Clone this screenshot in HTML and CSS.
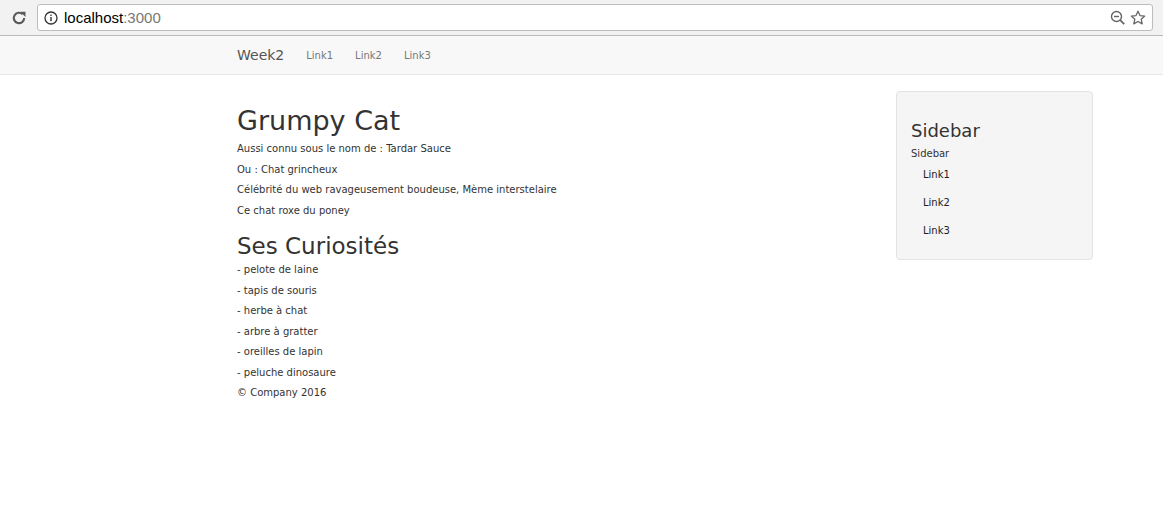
FILE: index.html
```html
<!DOCTYPE html>
<html lang="fr">
<head>
<meta charset="utf-8">
<title>Week2</title>
<link rel="stylesheet" href="styles.css">
</head>
<body>
<div class="chrome">
  <svg class="reload" width="16" height="16" viewBox="0 0 16 16"><path d="M13.2 8a5.2 5.2 0 1 1-1.6-3.8" fill="none" stroke="#5a5a5a" stroke-width="2.1"/><path d="M9.3 1.8h5.2V7z" fill="#5a5a5a"/></svg>
  <div class="omnibox">
    <svg class="info" width="14" height="14" viewBox="0 0 14 14"><circle cx="7" cy="7" r="6" fill="none" stroke="#333" stroke-width="1.3"/><rect x="6.3" y="6" width="1.4" height="4.2" fill="#333"/><rect x="6.3" y="3.5" width="1.4" height="1.4" fill="#333"/></svg>
    <span class="url">localhost<span class="port">:3000</span></span>
    <span class="spacer"></span>
    <svg class="zoom" width="16" height="16" viewBox="0 0 16 16"><circle cx="6.5" cy="6.5" r="5" fill="none" stroke="#666" stroke-width="1.4"/><path d="M4 6.5h5" stroke="#666" stroke-width="1.4"/><path d="M10.2 10.2l4 4" stroke="#666" stroke-width="1.8"/></svg>
    <svg class="star" width="16" height="16" viewBox="0 0 16 16"><path d="M8 1.3l2 4.3 4.7.5-3.5 3.2 1 4.6L8 11.5l-4.2 2.4 1-4.6L1.3 6.1l4.7-.5z" fill="none" stroke="#666" stroke-width="1.3" stroke-linejoin="round"/></svg>
  </div>
</div>
<nav class="navbar">
  <div class="nav-inner">
    <a class="brand" href="#">Week2</a>
    <a class="nav-link" href="#">Link1</a>
    <a class="nav-link" href="#">Link2</a>
    <a class="nav-link" href="#">Link3</a>
  </div>
</nav>
<div class="page">
  <main class="content">
    <h1>Grumpy Cat</h1>
    <p>Aussi connu sous le nom de : Tardar Sauce</p>
    <p>Ou : Chat grincheux</p>
    <p>Célébrité du web ravageusement boudeuse, Mème interstelaire</p>
    <p>Ce chat roxe du poney</p>
    <h2>Ses Curiosités</h2>
    <p>- pelote de laine</p>
    <p>- tapis de souris</p>
    <p>- herbe à chat</p>
    <p>- arbre à gratter</p>
    <p>- oreilles de lapin</p>
    <p>- peluche dinosaure</p>
    <footer class="footer">© Company 2016</footer>
  </main>
  <aside class="well">
    <h3>Sidebar</h3>
    <div class="well-sub">Sidebar</div>
    <ul class="side-links">
      <li><a href="#">Link1</a></li>
      <li><a href="#">Link2</a></li>
      <li><a href="#">Link3</a></li>
    </ul>
  </aside>
</div>
</body>
</html>
```
FILE: styles.css
```css
* { box-sizing: border-box; }
html, body { margin: 0; padding: 0; background: #fff; }
body { font-family: "DejaVu Sans", Verdana, sans-serif; color: #333; font-size: 10px; }
a { text-decoration: none; }

.chrome {
  height: 36px;
  background: #f2f2f2;
  border-bottom: 1px solid #b9b9b9;
  display: flex;
  align-items: center;
  padding: 0 10px 0 11px;
}
.reload { margin-right: 10px; }
.omnibox {
  flex: 1;
  height: 27px;
  background: #fff;
  border: 1px solid #bdbdbd;
  border-radius: 3px;
  display: flex;
  align-items: center;
  padding: 0 6px;
}
.info { margin-right: 6px; }
.url { font-family: "Liberation Sans", Arial, sans-serif; font-size: 15px; color: #000; }
.port { color: #777; }
.spacer { flex: 1; }
.zoom { margin-right: 4px; }

.navbar {
  height: 39px;
  background: #f8f8f8;
  border-bottom: 1px solid #e7e7e7;
}
.nav-inner {
  padding-left: 237px;
  display: flex;
  align-items: center;
  height: 100%;
}
.brand { font-size: 14px; color: #555; margin-right: 22px; }
.nav-link { font-size: 10px; color: #777; margin-right: 22px; }

.page {
  display: flex;
  align-items: flex-start;
  padding: 16px 70px 0 237px;
}
.content { flex: 1; }
h1 { font-size: 27px; font-weight: normal; margin: 12px 0 0; line-height: 36px; color: #333; }
h2 { font-size: 23px; font-weight: normal; margin: 11px 0 0; line-height: 28px; color: #333; }
.content p { margin: 0; line-height: 20.5px; }
.footer { line-height: 20.5px; }

.well {
  width: 197px;
  height: 169px;
  background: #f5f5f5;
  border: 1px solid #e3e3e3;
  border-radius: 4px;
  padding: 19px 14px;
}
h3 { font-size: 18px; font-weight: normal; margin: 8px 0 4px; line-height: 24px; color: #333; }
.well-sub { line-height: 14px; }
.side-links { list-style: none; margin: 0; padding: 0; }
.side-links a { display: block; padding: 7px 11px 7px 12px; line-height: 14px; color: #222; }
```
